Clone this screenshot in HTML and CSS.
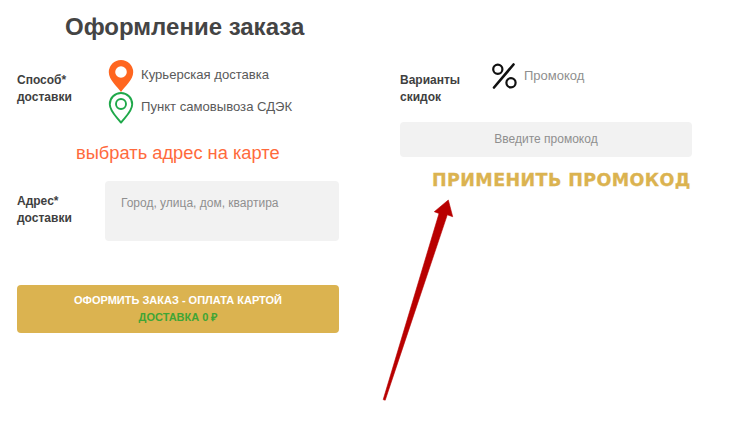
FILE: index.html
```html
<!DOCTYPE html>
<html lang="ru">
<head>
<meta charset="utf-8">
<title>Оформление заказа</title>
<link rel="stylesheet" href="styles.css">
</head>
<body>
<main class="page">
  <section class="col-left">
    <h1 class="title">Оформление заказа</h1>
    <div class="delivery">
      <div class="label">Способ*<br>доставки</div>
      <div class="options">
        <div class="option">
          <svg class="pin" width="26" height="32" viewBox="0 0 26 32"><path fill="#ff6620" fill-rule="evenodd" d="M13 32C9 26 .8 20 .8 12.2A12.2 12.2 0 0 1 25.2 12.2C25.2 20 17 26 13 32ZM13 6.200a5.800 5.800 0 1 0 0 11.600a5.800 5.800 0 0 0 0-11.600Z"/></svg>
          <span>Курьерская доставка</span>
        </div>
        <div class="option">
          <svg class="pin" width="26" height="32" viewBox="0 0 26 32"><path fill="none" stroke="#1fa84a" stroke-width="1.9" stroke-linejoin="round" d="M13 30.600C9 25 1.800 19.500 1.800 12.200A11.200 11.200 0 0 1 24.200 12.200C24.200 19.500 17 25 13 30.600Z"/><circle cx="13" cy="12" r="5" fill="none" stroke="#1fa84a" stroke-width="1.9"/></svg>
          <span>Пункт самовывоза СДЭК</span>
        </div>
      </div>
    </div>
    <a class="map-link">выбрать адрес на карте</a>
    <div class="address">
      <div class="label">Адрес*<br>доставки</div>
      <div class="address-input">Город, улица, дом, квартира</div>
    </div>
    <button class="submit">
      <span class="submit-main">ОФОРМИТЬ ЗАКАЗ - ОПЛАТА КАРТОЙ</span>
      <span class="submit-sub">ДОСТАВКА 0 ₽</span>
    </button>
  </section>
  <section class="col-right">
    <div class="discounts">
      <div class="label">Варианты<br>скидок</div>
      <svg class="percent" width="28" height="28" viewBox="0 0 28 28"><path d="M23.500 2.500 4 25.500" fill="none" stroke="#111" stroke-width="2.600" stroke-linecap="round"/><circle cx="7.800" cy="7.200" r="4.600" fill="none" stroke="#111" stroke-width="2.200"/><circle cx="21" cy="20.800" r="4.600" fill="none" stroke="#111" stroke-width="2.200"/></svg>
      <span class="promo-name">Промокод</span>
    </div>
    <div class="promo-input">Введите промокод</div>
    <div class="apply">ПРИМЕНИТЬ ПРОМОКОД</div>
  </section>
  <svg class="arrow" width="80" height="204" viewBox="0 0 80 204"><path fill="#b80000" stroke="#b80000" stroke-width="0.600" stroke-linejoin="round" d="M66.300 1 L70.700 17.700 L65.300 15.800 L3.200 201.200 L1.200 200.600 L57 14.500 L52.300 12.700 Z"/></svg>
</main>
</body>
</html>
```
FILE: styles.css
```css
* { box-sizing: border-box; }
html, body { margin: 0; padding: 0; background: #fff; }
body { width: 752px; height: 439px; overflow: hidden; font-family: "Liberation Sans", Arial, sans-serif; color: #555; }
.page { position: relative; display: flex; gap: 61px; padding-left: 17px; height: 439px; }
.col-left { width: 322px; display: flex; flex-direction: column; }
.col-right { width: 292px; display: flex; flex-direction: column; padding-top: 60px; }
.title { margin: 13px 0 0 48px; font-size: 24px; line-height: 28px; font-weight: 700; color: #444; }
.delivery { display: flex; margin-top: 19px; height: 64px; }
.label { font-size: 12px; line-height: 17px; font-weight: 700; color: #3f3f3f; }
.delivery .label { width: 91px; padding-top: 12px; }
.options { display: flex; flex-direction: column; }
.option { display: flex; height: 32px; align-items: flex-start; gap: 7px; font-size: 13.100px; line-height: 15px; color: #5a5a5a; }
.option span { padding-top: 7px; }
.pin { flex: none; }
.map-link { margin: 19px 0 0 59px; font-size: 18.300px; line-height: 20px; color: #ff6a3c; }
.address { display: flex; margin-top: 18px; height: 60px; }
.address .label { width: 88px; padding-top: 12px; }
.address-input { width: 234px; height: 60px; padding: 15px 16px; background: #f2f2f2; border-radius: 4px; font-size: 12px; line-height: 14px; color: #8f8f8f; }
.submit { margin-top: 44px; height: 48px; width: 322px; border: 0; border-radius: 4px; background: #dbb350; padding: 7px 0 0; display: flex; flex-direction: column; align-items: center; font-family: inherit; font-size: 11px; line-height: 17px; font-weight: 700; }
.submit-main { color: #fff; }
.submit-sub { color: #3fa535; }
.discounts { display: flex; height: 62px; }
.discounts .label { width: 90px; padding-top: 12px; }
.percent { flex: none; margin-top: 2px; }
.promo-name { margin-left: 6px; padding-top: 8px; font-size: 13px; line-height: 15px; color: #8f8f8f; }
.promo-input { height: 35px; background: #f2f2f2; border-radius: 4px; text-align: center; font-size: 12px; line-height: 35px; color: #8f8f8f; }
.apply { margin: 13px 0 0 32px; font-family: "DejaVu Sans", sans-serif; font-size: 17.500px; line-height: 20px; font-weight: 700; letter-spacing: 0.400px; -webkit-text-stroke: 0.300px #dbb350; color: #dbb350; white-space: nowrap; }
.arrow { position: absolute; left: 382px; top: 199px; }
```
